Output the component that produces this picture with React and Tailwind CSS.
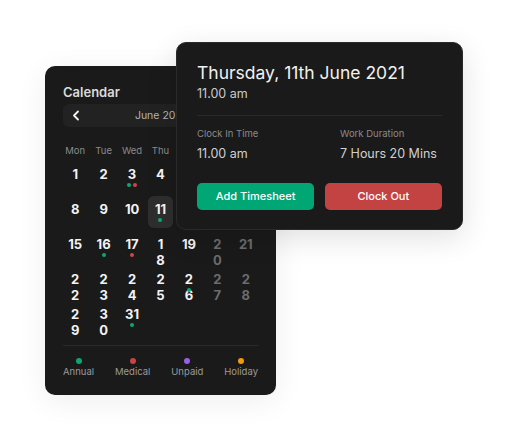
import React from 'react';

const WEEKDAYS = ['Mon', 'Tue', 'Wed', 'Thu', 'Fri', 'Sat', 'Sun'];

// dots per day: g = annual, r = medical
const DOTS = { 3: ['g', 'r'], 11: ['g'], 16: ['g'], 17: ['r'], 26: ['g'], 31: ['g'] };
const WRAPPED = [18, 20, 22, 23, 24, 25, 26, 27, 28, 29, 30];

const DOT_COLORS = { g: 'bg-[#0aa774]', r: 'bg-[#d04545]' };

const LEGEND = [
  { label: 'Annual', dot: 'bg-[#0aa774]' },
  { label: 'Medical', dot: 'bg-[#c94343]' },
  { label: 'Unpaid', dot: 'bg-[#9b5ee6]' },
  { label: 'Holiday', dot: 'bg-[#f29a0c]' },
];

const DayCell = ({ day, col }) => {
  const weekend = col >= 5;
  const selected = day === 11;
  const text = String(day);
  const wrapped = WRAPPED.includes(day);

  return (
    <div
      className={`h-[32px] flex flex-col items-center pt-[5.5px] rounded-md ${
        selected ? 'bg-[#2e2e2e]' : ''
      }`}
    >
      <div
        className={`h-[16px] leading-[16px] text-[13px] font-bold text-center ${
          weekend ? 'text-[#6c6c6c]' : 'text-[#f3f3f3]'
        }`}
      >
        {wrapped ? (
          <>
            {text[0]}
            <br />
            {text[1]}
          </>
        ) : (
          text
        )}
      </div>
      {DOTS[day] && (
        <div className="relative z-10 mt-[1px] flex gap-[2px]">
          {DOTS[day].map((c, i) => (
            <span key={i} className={`w-[4px] h-[4px] rounded-full ${DOT_COLORS[c]}`} />
          ))}
        </div>
      )}
    </div>
  );
};

const CalendarCard = () => {
  const days = Array.from({ length: 31 }, (_, i) => i + 1);

  return (
    <div className="w-[231px] h-[329px] rounded-[10px] bg-[#1a1a1a] px-[18px] pt-[17px] shadow-[0_6px_30px_rgba(0,0,0,0.07)]">
      <div className="text-[13px] leading-[18px] font-semibold text-[#dadada]">Calendar</div>

      {/* month switcher */}
      <div className="mt-[3px] h-[23px] rounded-md bg-[#222222] flex items-center justify-between px-[9px]">
        <svg width="8" height="11" viewBox="0 0 8 11" fill="none" aria-hidden="true">
          <path d="M6 1.5L2 5.5L6 9.5" stroke="#f2f2f2" strokeWidth="1.8" strokeLinecap="round" strokeLinejoin="round" />
        </svg>
        <span className="text-[10.5px] text-[#b3b3b3]">June 2021</span>
        <svg width="8" height="11" viewBox="0 0 8 11" fill="none" aria-hidden="true">
          <path d="M2 1.5L6 5.5L2 9.5" stroke="#f2f2f2" strokeWidth="1.8" strokeLinecap="round" strokeLinejoin="round" />
        </svg>
      </div>

      {/* weekdays */}
      <div className="mt-[18px] grid grid-cols-7 gap-x-[4px]">
        {WEEKDAYS.map(d => (
          <div key={d} className="text-center text-[9.5px] leading-[12px] text-[#8b8b8b]">{d}</div>
        ))}
      </div>

      {/* days */}
      <div className="mt-[3.5px] grid grid-cols-7 gap-x-[4px] gap-y-[3px]">
        {days.map((d, i) => (
          <DayCell key={d} day={d} col={i % 7} />
        ))}
      </div>

      <div className="mt-[12.5px] h-px bg-[#2a2a2a]" />

      {/* legend */}
      <div className="mt-[12px] flex justify-between">
        {LEGEND.map(l => (
          <div key={l.label} className="flex flex-col items-center gap-[2px]">
            <span className={`w-[6px] h-[6px] rounded-full ${l.dot}`} />
            <span className="text-[9.5px] leading-[12px] text-[#9a9a9a]">{l.label}</span>
          </div>
        ))}
      </div>
    </div>
  );
};

const ClockCard = () => (
  <div className="w-[287px] h-[188px] rounded-[10px] border border-[#2a2a2a] bg-[#1a1a1a] px-[20px] pt-[19px] shadow-[0_8px_30px_rgba(0,0,0,0.12)]">
    <div className="text-[17.5px] leading-[22px] text-[#f1f1f1] whitespace-nowrap">Thursday, 11th June 2021</div>
    <div className="mt-[2px] text-[12.5px] leading-[16px] text-[#cacaca]">11.00 am</div>

    <div className="mt-[13px] h-px bg-[#2a2a2a]" />

    <div className="mt-[12px] flex">
      <div className="w-[143px] shrink-0">
        <div className="text-[9.5px] leading-[12px] text-[#8a8a8a]">Clock In Time</div>
        <div className="mt-[4.5px] text-[12.5px] leading-[18px] text-[#d0d0d0]">11.00 am</div>
      </div>
      <div className="whitespace-nowrap">
        <div className="text-[9.5px] leading-[12px] text-[#8a8a8a]">Work Duration</div>
        <div className="mt-[4.5px] text-[12.5px] leading-[18px] text-[#d0d0d0]">7 Hours 20 Mins</div>
      </div>
    </div>

    <div className="mt-[20.5px] flex gap-[10.5px]">
      <button className="flex-1 h-[27px] rounded-[5px] bg-[#00a674] text-[11px] font-medium text-white">
        Add Timesheet
      </button>
      <button className="flex-1 h-[27px] rounded-[5px] bg-[#c34343] text-[11px] font-medium text-white">
        Clock Out
      </button>
    </div>
  </div>
);

export default function App() {
  return (
    <div
      className="relative w-[508px] h-[444px] bg-white overflow-hidden"
      style={{ fontFamily: 'Inter, "Noto Sans", sans-serif' }}
    >
      <div className="pt-[66px] pl-[45px]">
        <CalendarCard />
      </div>
      <div className="absolute left-[176px] top-[42px]">
        <ClockCard />
      </div>
    </div>
  );
}
